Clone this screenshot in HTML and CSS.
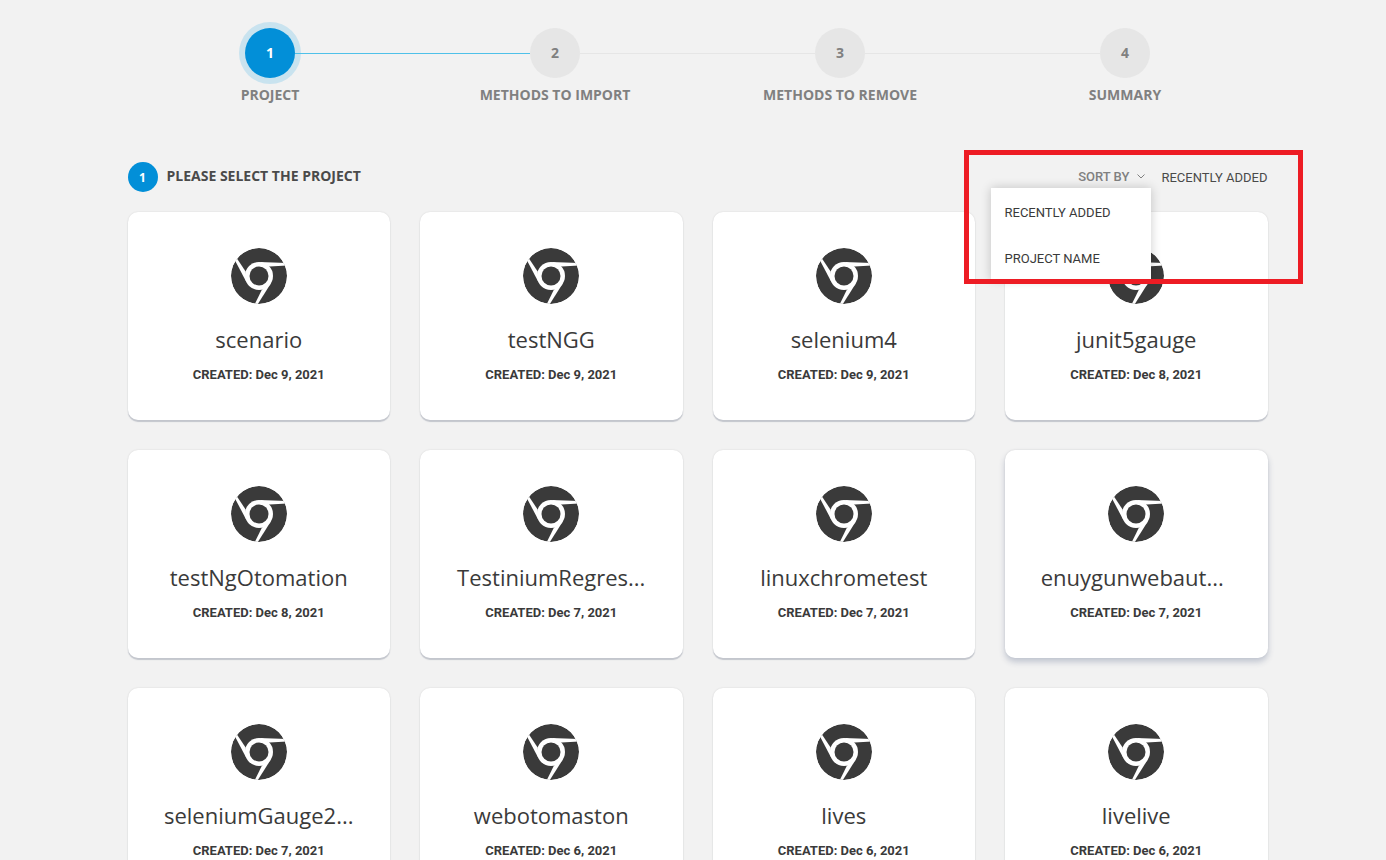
FILE: index.html
```html
<!DOCTYPE html>
<html lang="en">
<head>
<meta charset="utf-8">
<title>Select project</title>
<link rel="stylesheet" href="styles.css">
</head>
<body>
<svg class="sprite" aria-hidden="true">
  <symbol id="chrome" viewBox="0 0 56 56">
    <clipPath id="disc"><circle cx="28" cy="28" r="28"/></clipPath>
    <g clip-path="url(#disc)">
      <circle cx="28" cy="28" r="28" fill="#3a3a3a"/>
      <circle cx="28" cy="28" r="14" fill="#fff"/>
      <g fill="#fff">
        <path id="spoke" d="M28 14L58 15.2V17.4L38.5 18.6Z"/>
        <use href="#spoke" transform="rotate(120 28 28)"/>
        <use href="#spoke" transform="rotate(240 28 28)"/>
      </g>
      <circle cx="28" cy="28" r="9.5" fill="#3a3a3a"/>
    </g>
  </symbol>
</svg>
<main class="page">
  <ol class="steps">
    <li class="step active"><span class="step-number">1</span><span class="step-label">PROJECT</span></li>
    <li class="step"><span class="step-number">2</span><span class="step-label">METHODS TO IMPORT</span></li>
    <li class="step"><span class="step-number">3</span><span class="step-label">METHODS TO REMOVE</span></li>
    <li class="step"><span class="step-number">4</span><span class="step-label">SUMMARY</span></li>
  </ol>
  <header class="toolbar">
    <span class="badge">1</span>
    <h1 class="heading">PLEASE SELECT THE PROJECT</h1>
    <div class="sort">
      <button class="sort-button" type="button" aria-expanded="true" aria-controls="sort-menu">SORT BY
        <svg class="chevron" viewBox="0 0 8 5" aria-hidden="true"><path d="M.5 .5L4 4L7.500 .5" fill="none" stroke="currentColor"/></svg>
      </button>
      <span class="sort-value">RECENTLY ADDED</span>
      <div class="menu" id="sort-menu">
        <button class="menu-item" type="button">RECENTLY ADDED</button>
        <button class="menu-item" type="button">PROJECT NAME</button>
      </div>
      <div class="highlight"></div>
    </div>
  </header>
  <section class="grid">
    <article class="card"><svg class="logo"><use href="#chrome"/></svg><h2 class="name">scenario</h2><p class="date">CREATED: Dec 9, 2021</p></article>
    <article class="card"><svg class="logo"><use href="#chrome"/></svg><h2 class="name">testNGG</h2><p class="date">CREATED: Dec 9, 2021</p></article>
    <article class="card"><svg class="logo"><use href="#chrome"/></svg><h2 class="name">selenium4</h2><p class="date">CREATED: Dec 9, 2021</p></article>
    <article class="card"><svg class="logo"><use href="#chrome"/></svg><h2 class="name">junit5gauge</h2><p class="date">CREATED: Dec 8, 2021</p></article>
    <article class="card"><svg class="logo"><use href="#chrome"/></svg><h2 class="name">testNgOtomation</h2><p class="date">CREATED: Dec 8, 2021</p></article>
    <article class="card"><svg class="logo"><use href="#chrome"/></svg><h2 class="name">TestiniumRegres...</h2><p class="date">CREATED: Dec 7, 2021</p></article>
    <article class="card"><svg class="logo"><use href="#chrome"/></svg><h2 class="name">linuxchrometest</h2><p class="date">CREATED: Dec 7, 2021</p></article>
    <article class="card raised"><svg class="logo"><use href="#chrome"/></svg><h2 class="name name-long">enuygunwebaut...</h2><p class="date">CREATED: Dec 7, 2021</p></article>
    <article class="card"><svg class="logo"><use href="#chrome"/></svg><h2 class="name">seleniumGauge2...</h2><p class="date">CREATED: Dec 7, 2021</p></article>
    <article class="card"><svg class="logo"><use href="#chrome"/></svg><h2 class="name">webotomaston</h2><p class="date">CREATED: Dec 6, 2021</p></article>
    <article class="card"><svg class="logo"><use href="#chrome"/></svg><h2 class="name">lives</h2><p class="date">CREATED: Dec 6, 2021</p></article>
    <article class="card"><svg class="logo"><use href="#chrome"/></svg><h2 class="name">livelive</h2><p class="date">CREATED: Dec 6, 2021</p></article>
  </section>
</main>
</body>
</html>
```
FILE: styles.css
```css
* { box-sizing: border-box; }
body {
  margin: 0;
  padding-left: 9px;
  background: #f2f2f2;
  color: #3a3a3a;
  font-family: "Open Sans", sans-serif;
}
h1, h2, p, ol { margin: 0; padding: 0; }
button { border: 0; padding: 0; background: none; text-align: left; cursor: pointer; }
.sprite { position: absolute; width: 0; height: 0; }
.page { max-width: 1140px; margin: 0 auto; padding: 28px 0; }

.steps { display: grid; grid-template-columns: repeat(4, 1fr); list-style: none; }
.step {
  position: relative;
  display: flex;
  flex-direction: column;
  align-items: center;
  gap: 7px;
  color: #808080;
  font-size: 14px;
  line-height: 20px;
  font-weight: 700;
}
.step-number {
  display: grid;
  place-items: center;
  width: 50px;
  height: 50px;
  border-radius: 50%;
  background: #e6e6e6;
}
.step:not(:last-child)::after {
  content: "";
  position: absolute;
  top: 25px;
  left: calc(50% + 25px);
  width: calc(100% - 50px);
  height: 1px;
  background: #e6e6e6;
}
.step.active::after { background: #4fc1e9; }
.active .step-number { background: #028fd8; color: #fff; box-shadow: 0 0 0 6px #c9e3ef; }

.toolbar { display: flex; align-items: center; margin-top: 57px; }
.badge {
  display: grid;
  place-items: center;
  width: 30px;
  height: 30px;
  border-radius: 50%;
  background: #028fd8;
  color: #fff;
  font-size: 12px;
  font-weight: 700;
}
.heading { margin-left: 9px; padding-bottom: 2px; font-size: 14px; line-height: 20px; font-weight: 700; color: #4a4a4a; }
.sort {
  position: relative;
  display: flex;
  align-items: center;
  gap: 16px;
  margin-left: auto;
  height: 30px;
  font-family: Roboto, sans-serif;
  font-size: 13px;
}
.sort-button { display: flex; align-items: center; gap: 8px; padding-bottom: 2px; font: inherit; font-weight: 500; color: #808080; }
.chevron { width: 8px; height: 5px; }
.sort-value { color: #4a4a4a; }
.menu {
  position: absolute;
  z-index: 1;
  top: 26px;
  right: 117px;
  width: 160px;
  background: #fff;
  box-shadow: 0 0 10px rgba(0, 0, 0, .2);
}
.menu-item { display: block; width: 100%; height: 46px; padding: 2px 14px 0; font: inherit; color: #3a3a3a; }
.highlight {
  position: absolute;
  z-index: 2;
  top: -12px;
  right: -35px;
  width: 339px;
  height: 134px;
  border: 5px solid #ed1c24;
  pointer-events: none;
}

.grid { display: grid; grid-template-columns: repeat(4, 1fr); gap: 30px; margin-top: 20px; }
.card {
  display: flex;
  flex-direction: column;
  align-items: center;
  min-height: 208px;
  padding-top: 36px;
  border-radius: 10px;
  background: #fff;
  box-shadow: 0 2px 1px #c3c6cd, 0 0 2px rgba(0, 0, 0, .12);
}
.raised { box-shadow: 0 4px 6px #c0c5d0, 0 0 2px rgba(0, 0, 0, .12); }
.logo { width: 56px; height: 56px; }
.name { margin-top: 19px; font-size: 22px; line-height: 32px; font-weight: 400; }
.name-long { margin-right: 8px; }
.date { margin-top: 10px; font-family: Roboto, sans-serif; font-size: 13px; line-height: 20px; font-weight: 700; }
```
